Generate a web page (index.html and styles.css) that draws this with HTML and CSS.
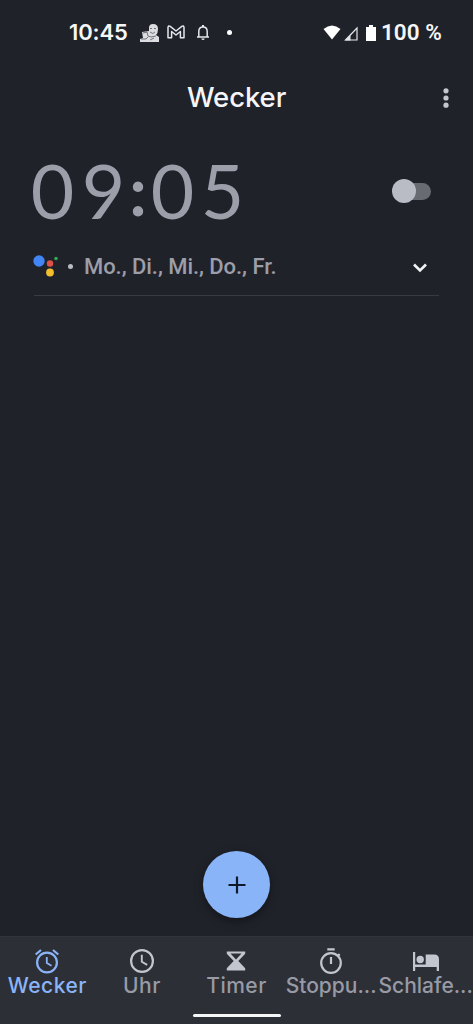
FILE: index.html
```html
<!DOCTYPE html>
<html lang="de">
<head>
<meta charset="utf-8">
<title>Wecker</title>
<link rel="stylesheet" href="styles.css">
</head>
<body>
<div class="screen">
  <div class="status">
    <span class="status-time">10:45</span>
    <svg class="ic-photo" width="20" height="18" viewBox="0 0 20 18"><path fill="#dcdde0" d="M9 4Q9 0 13 0q5 0 5 5 0 4-2 6l3 2v5H0v-3l3-1-1-6 7-1z"/><path fill="none" stroke="#55575f" stroke-width=".8" d="M10 4.500h2m2 0h2M10 8q3 3 5 0M3 9l4-1 1 4 3 1 5-1M1 15h5l2-2m2 3 4-2"/></svg>
    <svg class="ic-mail" width="18" height="14" viewBox="0 0 18 14"><path fill="none" stroke="#e6e7ea" stroke-width="1.500" stroke-linejoin="round" d="M1 12.800V2.300Q1.400.2 3.200 1.300L9 6l5.800-4.700Q16.600.2 17 2.300v10.500h-3.600V6.500L9 10 4.600 6.500v6.300z"/></svg>
    <svg class="ic-bell" width="14" height="17" viewBox="0 0 14 17"><path fill="none" stroke="#e6e7ea" stroke-width="1.500" d="M1 13h12M2.800 13V7.500Q2.800 3 7 3t4.200 4.500V13"/><path fill="#e6e7ea" d="M6 1h2v2H6zM5.300 14.500h3.400Q8.500 16 7 16t-1.700-1.500"/></svg>
    <span class="status-dot"></span>
    <svg class="ic-wifi" width="18" height="15" viewBox="0 0 18 15"><path fill="#fff" d="M.5 4Q9-3 17.500 4L9 14.500z"/></svg>
    <svg class="ic-cell" width="14" height="15" viewBox="0 0 14 15"><path fill="none" stroke="#e6e7ea" stroke-width="1.200" d="M1.500 14 13 2v12z"/><path fill="#e6e7ea" d="M1 14.500 6.500 9v5.500z"/></svg>
    <svg class="ic-battery" width="10" height="16" viewBox="0 0 10 16"><path fill="#fff" d="M3 0h4v2h3v14H0V2h3z"/></svg>
    <span class="status-percent">100 %</span>
  </div>

  <header class="header">
    <h1 class="title">Wecker</h1>
    <svg class="more" width="6" height="20" viewBox="0 0 6 20" fill="#c3c6cf"><circle cx="3" cy="2.800" r="2.600"/><circle cx="3" cy="10" r="2.600"/><circle cx="3" cy="17.200" r="2.600"/></svg>
  </header>

  <main class="alarm">
    <div class="alarm-main">
      <div class="alarm-time"><span>0</span><span>9</span><span class="colon">:</span><span>0</span><span>5</span></div>
      <div class="switch"><span class="knob"></span></div>
    </div>
    <div class="alarm-days">
      <svg class="assistant" width="26" height="24" viewBox="0 0 26 24"><circle cx="6" cy="7" r="5.700" fill="#4285f4"/><circle cx="17" cy="9.500" r="3.200" fill="#df5146"/><circle cx="23" cy="4.500" r="1.800" fill="#34a853"/><circle cx="17" cy="18.500" r="3.900" fill="#f4bf2f"/></svg>
      <span class="bullet"></span>
      <span class="days">Mo., Di., Mi., Do., Fr.</span>
      <svg class="chevron" width="14" height="10" viewBox="0 0 14 10"><path fill="none" stroke="#f3f4f7" stroke-width="2.600" d="m1 1.500 6 6 6-6"/></svg>
    </div>
  </main>

  <div class="fab"><svg width="18" height="18" viewBox="0 0 18 18"><path stroke="#10192b" stroke-width="2.200" d="M9 .5v17M.5 9h17"/></svg></div>

  <nav class="nav">
    <div class="tabs">
      <div class="tab active">
        <svg width="26" height="26" viewBox="0 0 26 26" fill="none" stroke="currentColor" stroke-width="2.200"><circle cx="13" cy="14.500" r="9.900"/><path d="M1.700 6.500 7 2M24.300 6.500 19 2"/><path stroke-width="1.800" d="M12.800 9v6l4.700 2.800"/></svg>
        <span class="label">Wecker</span>
      </div>
      <div class="tab">
        <svg width="26" height="26" viewBox="0 0 26 26" fill="none" stroke="#c3c6cf" stroke-width="2.200"><circle cx="13" cy="13" r="10.900"/><path stroke-width="1.900" d="M12.800 6.800v7l5.400 3"/></svg>
        <span class="label">Uhr</span>
      </div>
      <div class="tab">
        <svg width="26" height="26" viewBox="0 0 26 26"><path fill="#c3c6cf" fill-rule="evenodd" d="M3.800 3.500h18.400v2.300L15.300 13l6.900 7.200v2.300H3.800v-2.300L10.700 13 3.800 5.800zM7.500 5.500l5.500 6 5.500-6z"/></svg>
        <span class="label">Timer</span>
      </div>
      <div class="tab">
        <svg width="26" height="26" viewBox="0 0 26 26" fill="none" stroke="#c3c6cf" stroke-width="2.200"><circle cx="13" cy="15" r="9.800"/><path d="M9.300 1.300h7.400M13 9v7M19.300 8.500l2.400-2.400"/></svg>
        <span class="label long">Stoppu...</span>
      </div>
      <div class="tab">
        <svg width="28" height="26" viewBox="0 0 28 26"><path fill="#c3c6cf" d="M1 4h2.200v12.500h10.500V6.500h8.500q4.800 0 4.800 4.800V23h-2.300v-4H3.200v4H1z"/><circle cx="8.200" cy="11.500" r="3.700" fill="#c3c6cf"/></svg>
        <span class="label long">Schlafe...</span>
      </div>
    </div>
    <div class="handle"></div>
  </nav>
</div>
</body>
</html>
```
FILE: styles.css
```css
* { box-sizing: border-box; }
body { margin: 0; background: #20222a; }
svg { display: block; flex: none; }
.screen {
  width: 473px;
  height: 1024px;
  display: flex;
  flex-direction: column;
  background: #20222a;
  font-family: Inter, "Open Sans", sans-serif;
  overflow: hidden;
}
.status {
  height: 65px;
  padding: 0 31px 1px 69px;
  display: flex;
  align-items: center;
  color: #f5f6f8;
  font-size: 22px;
  font-weight: 600;
  white-space: nowrap;
}
.status-time { width: 71px; letter-spacing: -0.1px; }
.ic-photo { margin-top: 1px; }
.ic-mail { margin-left: 7px; }
.ic-bell { margin: 1px 0 0 11px; }
.status-dot { width: 5px; height: 5px; border-radius: 50%; background: #fff; margin: 1px 0 0 17px; }
.ic-wifi { margin: 1px 0 0 auto; }
.ic-cell { margin: 2px 0 0 3px; }
.ic-battery { margin: 2px 0 0 8px; }
.status-percent { width: 61px; margin-left: 5px; font-family: Roboto, sans-serif; font-size: 22.500px; }
.header {
  height: 65px;
  padding: 0 24px 0 187px;
  display: flex;
  align-items: center;
  justify-content: space-between;
}
.title { margin: 0 0 2px; color: #f5f6fa; font-size: 27.500px; font-weight: 500; line-height: 36px; letter-spacing: -0.1px; }
.alarm { margin: 0 34px; border-bottom: 1px solid #383b43; height: 166px; }
.alarm-main { height: 122px; display: flex; align-items: center; justify-content: space-between; }
.alarm-time { display: flex; color: #9c9ea9; font: 400 75px/90px Lato, sans-serif; margin: -2px 0 0 -7px; }
.alarm-time span { width: 51px; text-align: center; }
.alarm-time .colon { width: 18px; font-size: 68px; font-weight: 700; }
.alarm-time .colon + span { margin-right: -1px; }
.switch { width: 34px; height: 17px; margin-right: 8px; border-radius: 9px; background: #696b73; display: flex; align-items: center; }
.knob { flex: none; width: 24px; height: 24px; margin-left: -5px; border-radius: 50%; background: #b9bcc5; }
.alarm-days { height: 30px; display: flex; align-items: center; }
.assistant { margin: -2px 0 0 -1px; }
.bullet { width: 5px; height: 5px; border-radius: 50%; background: #b9bcc5; margin: -1px 0 0 9px; }
.days { margin-left: 11px; color: #9c9ea9; font: 500 22px/30px Roboto, sans-serif; letter-spacing: -0.05px; white-space: nowrap; }
.chevron { margin: 2px 12px 0 auto; }
.fab {
  width: 67px;
  height: 67px;
  margin: auto auto 18px 203px;
  border-radius: 50%;
  background: #8ab4f8;
  box-shadow: 0 3px 10px rgba(0, 0, 0, 0.4);
  display: flex;
  align-items: center;
  justify-content: center;
}
.nav { height: 88px; background: #2d2f37; border-top: 1px solid #31343b; }
.tabs { display: grid; grid-template-columns: repeat(5, 94.6px); height: 76px; padding-top: 11px; }
.tab { display: flex; flex-direction: column; align-items: center; color: #989aa5; }
.tab.active { color: #8ab4f8; }
.label { font-size: 21px; line-height: 24px; font-weight: 500; letter-spacing: 0.5px; white-space: nowrap; }
.label.long { letter-spacing: 0; }
.handle { width: 88px; height: 3px; margin: 1px auto 0; border-radius: 2px; background: #f5f6f8; }
```
